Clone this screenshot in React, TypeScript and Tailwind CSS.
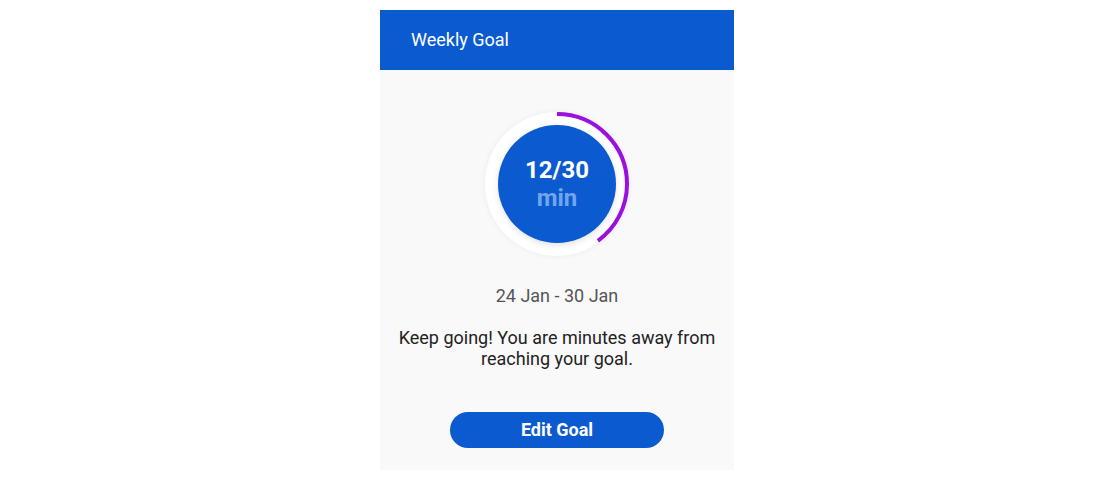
import React from 'react'

const ProgressRing = ({ value, goal }: { value: number; goal: number }) => {
    const r = 70
    const c = 2 * Math.PI * r
    const pct = value / goal
    return (
        <div className="relative w-[144px] h-[144px] rounded-full bg-white shadow-[0_0_6px_rgba(0,0,0,0.06)] flex items-center justify-center">
            <div className="w-[118px] h-[118px] rounded-full bg-[#0c5ad0] shadow-[0_2px_6px_rgba(0,0,0,0.12)] flex flex-col items-center justify-center">
                <span className="text-[24px] leading-[28px] font-bold text-white">{value}/{goal}</span>
                <span className="text-[24px] leading-[28px] font-bold text-[#72a6ec]">min</span>
            </div>
            <svg className="absolute inset-0" width="144" height="144" viewBox="0 0 144 144">
                <circle
                    cx="72"
                    cy="72"
                    r={r}
                    fill="none"
                    stroke="#9b0fe0"
                    strokeWidth="4"
                    strokeDasharray={`${c * pct} ${c}`}
                    transform="rotate(-90 72 72)"
                />
            </svg>
        </div>
    )
}

const App = () => {
    return (
        <div className="min-h-[502px] bg-white pt-[10px] font-['Roboto','Liberation_Sans',sans-serif]">
            <div className="ml-[380px] w-[354px] bg-[#f9f9f9]">
                <div className="h-[60px] bg-[#0c5ad0] flex items-center px-[31px] pb-[2px]">
                    <h1 className="text-[18px] text-white">Weekly Goal</h1>
                </div>
                <div className="flex flex-col items-center pt-[42px] pb-[22px]">
                    <ProgressRing value={12} goal={30} />
                    <p className="mt-[29px] text-[18px] leading-[22px] text-[#555555]">24 Jan - 30 Jan</p>
                    <p className="mt-[20px] px-[12px] text-center text-[18px] leading-[21px] text-[#222222]">
                        Keep going! You are minutes away from reaching your goal.
                    </p>
                    <button className="mt-[43px] w-[214px] h-[36px] pb-[2px] rounded-full bg-[#0c5ad0] text-white text-[18px] font-bold">
                        Edit Goal
                    </button>
                </div>
            </div>
        </div>
    )
}

export default App
